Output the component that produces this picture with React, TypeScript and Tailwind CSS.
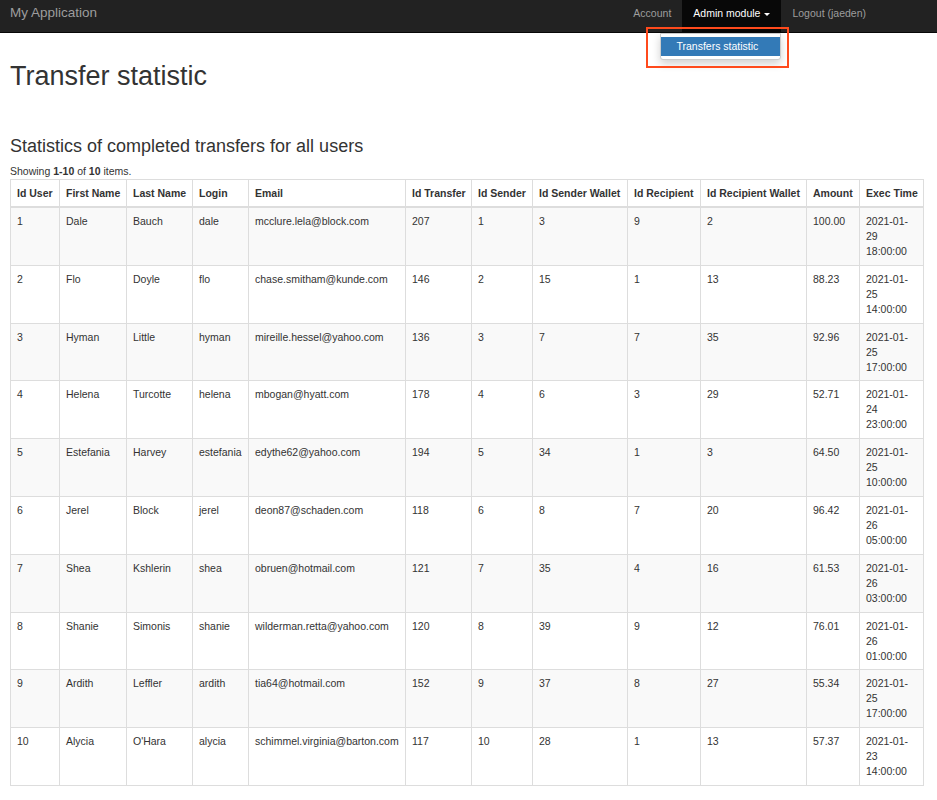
import React from 'react';

interface TransferRow {
  idUser: number;
  firstName: string;
  lastName: string;
  login: string;
  email: string;
  idTransfer: number;
  idSender: number;
  idSenderWallet: number;
  idRecipient: number;
  idRecipientWallet: number;
  amount: string;
  date: string;
  time: string;
}

const rows: TransferRow[] = [
  { idUser: 1, firstName: 'Dale', lastName: 'Bauch', login: 'dale', email: 'mcclure.lela@block.com', idTransfer: 207, idSender: 1, idSenderWallet: 3, idRecipient: 9, idRecipientWallet: 2, amount: '100.00', date: '29', time: '18:00:00' },
  { idUser: 2, firstName: 'Flo', lastName: 'Doyle', login: 'flo', email: 'chase.smitham@kunde.com', idTransfer: 146, idSender: 2, idSenderWallet: 15, idRecipient: 1, idRecipientWallet: 13, amount: '88.23', date: '25', time: '14:00:00' },
  { idUser: 3, firstName: 'Hyman', lastName: 'Little', login: 'hyman', email: 'mireille.hessel@yahoo.com', idTransfer: 136, idSender: 3, idSenderWallet: 7, idRecipient: 7, idRecipientWallet: 35, amount: '92.96', date: '25', time: '17:00:00' },
  { idUser: 4, firstName: 'Helena', lastName: 'Turcotte', login: 'helena', email: 'mbogan@hyatt.com', idTransfer: 178, idSender: 4, idSenderWallet: 6, idRecipient: 3, idRecipientWallet: 29, amount: '52.71', date: '24', time: '23:00:00' },
  { idUser: 5, firstName: 'Estefania', lastName: 'Harvey', login: 'estefania', email: 'edythe62@yahoo.com', idTransfer: 194, idSender: 5, idSenderWallet: 34, idRecipient: 1, idRecipientWallet: 3, amount: '64.50', date: '25', time: '10:00:00' },
  { idUser: 6, firstName: 'Jerel', lastName: 'Block', login: 'jerel', email: 'deon87@schaden.com', idTransfer: 118, idSender: 6, idSenderWallet: 8, idRecipient: 7, idRecipientWallet: 20, amount: '96.42', date: '26', time: '05:00:00' },
  { idUser: 7, firstName: 'Shea', lastName: 'Kshlerin', login: 'shea', email: 'obruen@hotmail.com', idTransfer: 121, idSender: 7, idSenderWallet: 35, idRecipient: 4, idRecipientWallet: 16, amount: '61.53', date: '26', time: '03:00:00' },
  { idUser: 8, firstName: 'Shanie', lastName: 'Simonis', login: 'shanie', email: 'wilderman.retta@yahoo.com', idTransfer: 120, idSender: 8, idSenderWallet: 39, idRecipient: 9, idRecipientWallet: 12, amount: '76.01', date: '26', time: '01:00:00' },
  { idUser: 9, firstName: 'Ardith', lastName: 'Leffler', login: 'ardith', email: 'tia64@hotmail.com', idTransfer: 152, idSender: 9, idSenderWallet: 37, idRecipient: 8, idRecipientWallet: 27, amount: '55.34', date: '25', time: '17:00:00' },
  { idUser: 10, firstName: 'Alycia', lastName: "O'Hara", login: 'alycia', email: 'schimmel.virginia@barton.com', idTransfer: 117, idSender: 10, idSenderWallet: 28, idRecipient: 1, idRecipientWallet: 13, amount: '57.37', date: '23', time: '14:00:00' },
];

const columns = [
  { label: 'Id User', width: 'w-[49px]' },
  { label: 'First Name', width: 'w-[67px]' },
  { label: 'Last Name', width: 'w-[66px]' },
  { label: 'Login', width: 'w-[56px]' },
  { label: 'Email', width: 'w-[157px]' },
  { label: 'Id Transfer', width: 'w-[66px]' },
  { label: 'Id Sender', width: 'w-[61px]' },
  { label: 'Id Sender Wallet', width: 'w-[95px]' },
  { label: 'Id Recipient', width: 'w-[73px]' },
  { label: 'Id Recipient Wallet', width: 'w-[106px]' },
  { label: 'Amount', width: 'w-[53px]' },
  { label: 'Exec Time', width: 'w-[64px]' },
];

const td = 'border border-[#ddd] px-[6px] pt-[6px] pb-[5.8px] align-top';

const App = () => {
  return (
    <div className="relative min-h-screen bg-white text-[#333] font-['Liberation_Sans',Arial,sans-serif] text-[10.5px] leading-[15px]">
      {/* Navbar */}
      <nav className="h-[33px] bg-[#222] border-b border-[#080808] flex items-start justify-between">
        <span className="pl-[10px] pt-[5px] text-[13.5px] leading-[16px] text-[#9d9d9d]">My Application</span>
        <ul className="flex h-full pr-[60px]">
          <li className="px-[11px] pt-[6px] text-[#9d9d9d]">Account</li>
          <li className="relative px-[11px] pt-[6px] flex items-start bg-[#080808] text-white">
            Admin module
            <span className="ml-[4px] mt-[7px] inline-block w-0 h-0 border-x-[3px] border-x-transparent border-t-[3px] border-t-white"></span>
            <div className="absolute top-[33px] right-0 w-[121px] bg-white border border-[#ccc] rounded-b-[3px] shadow-[0_4px_9px_rgba(0,0,0,0.18)] py-[3px] z-10">
              <div className="bg-[#337ab7] text-white px-[15px] py-[2px] whitespace-nowrap">Transfers statistic</div>
            </div>
          </li>
          <li className="px-[11px] pt-[6px] text-[#9d9d9d]">Logout (jaeden)</li>
        </ul>
      </nav>

      {/* Annotation box */}
      <div className="absolute left-[646px] top-[27px] w-[143px] h-[41px] border-2 border-[#ff4a1c] z-20 pointer-events-none"></div>

      <main className="px-[10px] pb-[20px]">
        <h1 className="mt-[28px] text-[27px] leading-[30px]">Transfer statistic</h1>
        <h3 className="mt-[45px] mb-[8px] text-[18px] leading-[20px]">Statistics of completed transfers for all users</h3>
        <div>
          Showing <b>1-10</b> of <b>10</b> items.
        </div>
        <table className="border-collapse border border-[#ddd] table-fixed w-[913px]">
          <thead>
            <tr>
              {columns.map((col) => (
                <th
                  key={col.label}
                  className={`${col.width} border border-[#ddd] border-b-2 px-[6px] pt-[6px] pb-[5px] text-left align-bottom font-bold whitespace-nowrap`}
                >
                  {col.label}
                </th>
              ))}
            </tr>
          </thead>
          <tbody>
            {rows.map((row, i) => (
              <tr key={row.idUser} className={i % 2 === 0 ? 'bg-[#f9f9f9]' : 'bg-white'}>
                <td className={td}>{row.idUser}</td>
                <td className={td}>{row.firstName}</td>
                <td className={td}>{row.lastName}</td>
                <td className={td}>{row.login}</td>
                <td className={td}>{row.email}</td>
                <td className={td}>{row.idTransfer}</td>
                <td className={td}>{row.idSender}</td>
                <td className={td}>{row.idSenderWallet}</td>
                <td className={td}>{row.idRecipient}</td>
                <td className={td}>{row.idRecipientWallet}</td>
                <td className={td}>{row.amount}</td>
                <td className={td}>
                  2021-01-
                  <br />
                  {row.date}
                  <br />
                  {row.time}
                </td>
              </tr>
            ))}
          </tbody>
        </table>
      </main>
    </div>
  );
};

export default App;
